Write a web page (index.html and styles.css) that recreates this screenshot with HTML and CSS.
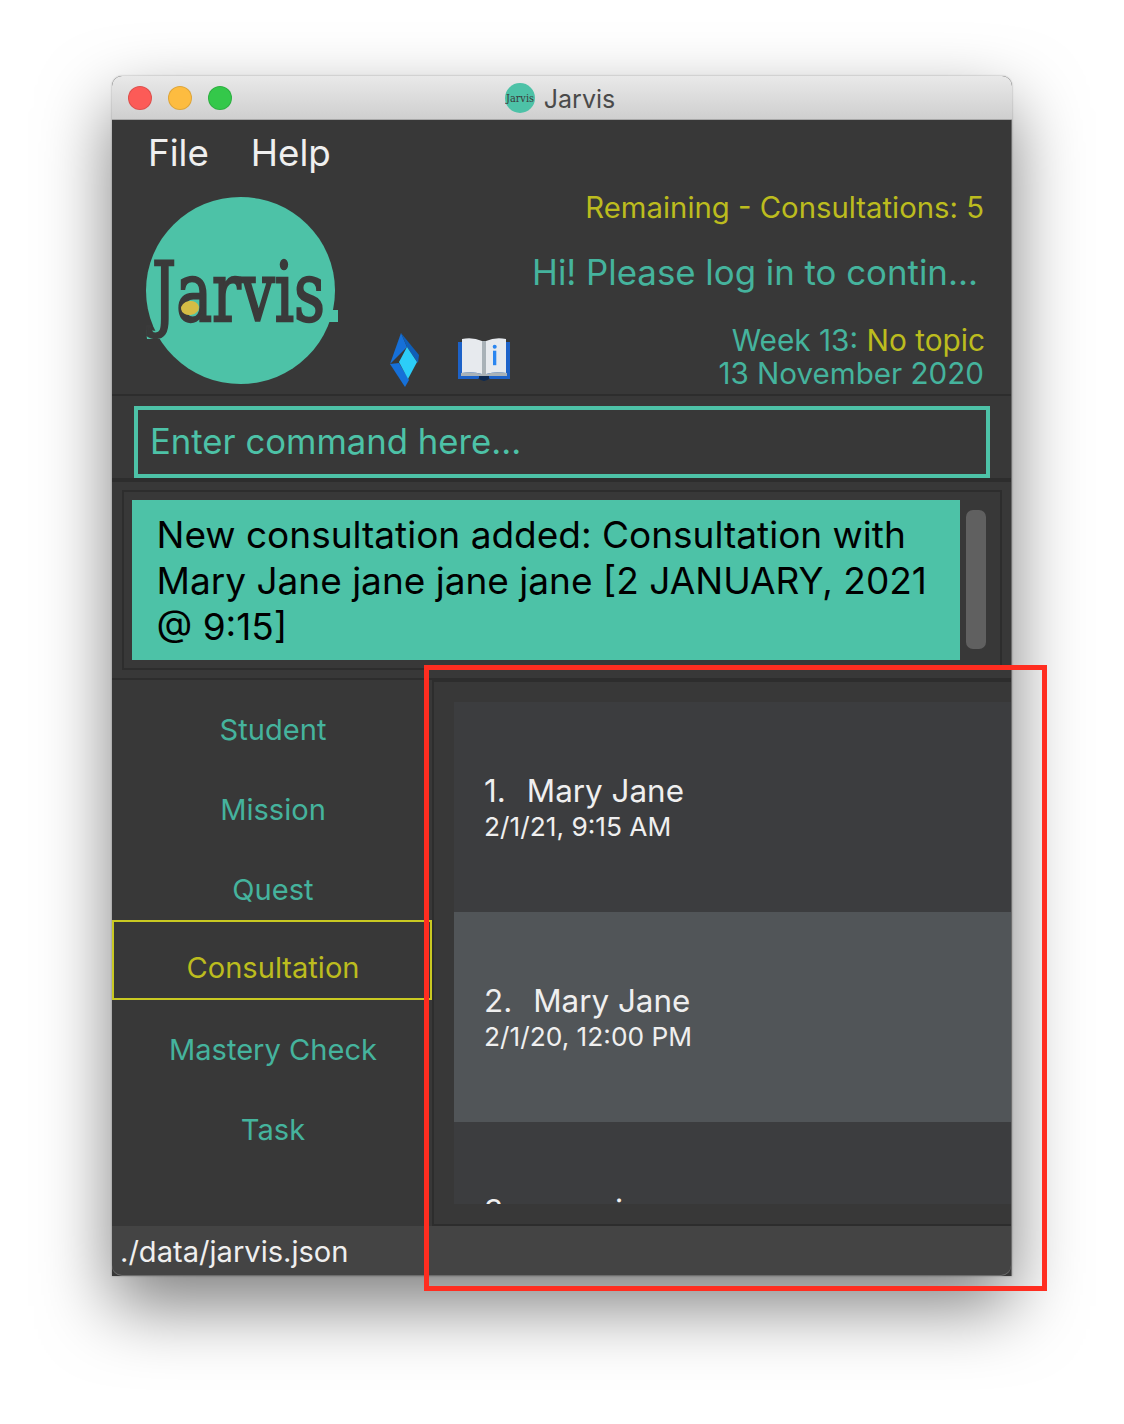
FILE: index.html
```html
<!DOCTYPE html>
<html lang="en">
<head>
<meta charset="utf-8">
<title>Jarvis</title>
<link rel="stylesheet" href="styles.css">
</head>
<body>
<div class="window">
  <header class="titlebar">
    <div class="lights"><span class="light red"></span><span class="light yellow"></span><span class="light green"></span></div>
    <div class="title">
      <svg class="title-logo" viewBox="0 0 30 30"><circle cx="15" cy="15" r="15" fill="#4dc2a7"/><text x="15" y="19" text-anchor="middle" class="title-logo-text" textLength="28" lengthAdjust="spacingAndGlyphs">Jarvis</text></svg>
      <span class="title-text">Jarvis</span>
    </div>
  </header>
  <div class="content">
    <section class="top">
      <nav class="menu"><span>File</span><span>Help</span></nav>
      <div class="brand-row">
        <svg class="logo" viewBox="0 0 194 190">
          <ellipse cx="94.500" cy="93.500" rx="94.500" ry="93.500" fill="#4dc2a7"/>
          <path d="M0 133 L11 134 L15 142 L1 142 Z" fill="#4dc2a7"/>
          <path d="M184 113 L192 113 L192 125 L182 125 Z" fill="#4dc2a7"/>
          <text x="6" y="124" class="logo-text" textLength="173" lengthAdjust="spacingAndGlyphs">Jarvis</text>
          <ellipse cx="44" cy="111" rx="9" ry="7" fill="#d4bc45" transform="rotate(-8 44 111)"/>
        </svg>
        <div class="icons">
          <svg class="gem" viewBox="0 0 30 54">
            <path d="M11 0 L0 31 L17 14 Z" fill="#1670d8"/>
            <path d="M11 0 L29 22 L28 30 L17 14 Z" fill="#0f5fb8"/>
            <path d="M0 31 L15 54 L19 47 L9 30 Z" fill="#1670d8"/>
            <path d="M17 14 L9 29 L18 46 L27 29 Z" fill="#2ccdf8"/>
          </svg>
          <svg class="book" viewBox="0 0 52 43">
            <rect x="0" y="4" width="52" height="37" fill="#1d62c8"/>
            <path d="M20 40 Q26 46 32 40 Z" fill="#0e2a52"/>
            <path d="M4 35 L4 1 Q15 -1 24 3 L24 36 Q14 33 4 35 Z" fill="#e7eaee"/>
            <path d="M28 3 Q37 -1 48 1 L48 35 Q38 33 28 36 Z" fill="#e7eaee"/>
            <rect x="24" y="3" width="4" height="34" fill="#a9b2b8"/>
            <path d="M3 35 Q14 33 24 36 L28 36 Q38 33 49 35 L49 38 L3 38 Z" fill="#a9b2b8"/>
            <rect x="21" y="38" width="10" height="2" fill="#0e2a52"/>
            <circle cx="36.700" cy="8.700" r="2" fill="#2b86f0"/>
            <rect x="35" y="12.700" width="3.300" height="14.500" fill="#2b86f0"/>
          </svg>
        </div>
        <div class="info">
          <div class="remaining">Remaining - Consultations: 5</div>
          <div class="greeting">Hi! Please log in to contin...</div>
          <div class="week"><span class="teal">Week 13:</span> <span class="olive">No topic</span></div>
          <div class="date">13 November 2020</div>
        </div>
      </div>
    </section>
    <section class="command-bar">
      <div class="command">Enter command here...</div>
    </section>
    <section class="result-bar">
      <div class="result-frame">
        <div class="result">New consultation added: Consultation with<br>Mary Jane jane jane jane [2 JANUARY, 2021<br>@ 9:15]</div>
        <div class="scroll-track"><div class="scroll-thumb"></div></div>
      </div>
    </section>
    <section class="main">
      <aside class="tabs">
        <div class="tab">Student</div>
        <div class="tab">Mission</div>
        <div class="tab">Quest</div>
        <div class="tab active">Consultation</div>
        <div class="tab">Mastery Check</div>
        <div class="tab">Task</div>
      </aside>
      <div class="panel">
        <div class="list">
          <article class="card">
            <div class="card-name"><span class="num">1.</span>Mary Jane</div>
            <div class="card-date">2/1/21, 9:15 AM</div>
          </article>
          <article class="card alt">
            <div class="card-name"><span class="num">2.</span>Mary Jane</div>
            <div class="card-date">2/1/20, 12:00 PM</div>
          </article>
          <article class="card">
            <div class="card-name"><span class="num">3.</span>omani</div>
            <div class="card-date"></div>
          </article>
        </div>
      </div>
    </section>
    <footer class="status">./data/jarvis.json</footer>
  </div>
</div>
<div class="annotation"></div>
</body>
</html>
```
FILE: styles.css
```css
* { box-sizing: border-box; }
html, body { margin: 0; height: 100%; background: #fff; overflow: hidden; }
body { font-family: Inter, "Noto Sans", sans-serif; position: relative; padding: 76px 112px 0; }

.window {
  width: 900px;
  height: 1200px;
  display: flex;
  flex-direction: column;
  border-radius: 10px 10px 0 0;
  box-shadow: 0 30px 70px rgba(0,0,0,.5), 0 0 2px rgba(0,0,0,.35);
  background: #383838;
}

.titlebar {
  height: 44px;
  flex: none;
  position: relative;
  display: flex;
  align-items: center;
  justify-content: center;
  background: linear-gradient(#e9e9e9, #cfcfcf);
  border-radius: 10px 10px 0 0;
  border-bottom: 1px solid #a8a8a8;
}
.lights { position: absolute; left: 16px; top: 10px; display: flex; gap: 16px; }
.light { width: 24px; height: 24px; border-radius: 50%; border: 1px solid rgba(0,0,0,.12); }
.red { background: #fc5b57; }
.yellow { background: #fdbc40; }
.green { background: #34c84a; }
.title { display: flex; align-items: center; gap: 9px; color: #4a4a4a; font-size: 25px; margin-right: 4px; }
.title-text { margin-top: 2px; }
.title-logo { width: 30px; height: 30px; display: block; }
.title-logo-text { font-family: "DejaVu Serif", serif; font-size: 11px; fill: #3a3a3a; }

.content { flex: 1; min-height: 0; display: flex; flex-direction: column; border-right: 1px solid #6d6d6d; }

.top { height: 276px; flex: none; position: relative; border-bottom: 2px solid #2d2d2d; }
.menu { display: flex; gap: 42px; padding-left: 36px; height: 68px; padding-top: 8px; color: #efefef; font-size: 36.7px; line-height: 50px; }
.brand-row { position: relative; display: flex; height: 206px; }
.logo { width: 194px; height: 190px; margin: 9px 0 0 34px; flex: none; display: block; }
.logo-text { font-family: "DejaVu Serif", serif; font-size: 82px; fill: #3a3a3a; stroke: #3a3a3a; stroke-width: 2.4px; }
.icons { display: flex; align-items: flex-start; gap: 38px; margin-left: 50px; padding-top: 145px; flex: none; }
.gem { width: 30px; height: 54px; display: block; }
.book { width: 52px; height: 43px; margin-top: 5px; display: block; }
.info { flex: 1; display: flex; flex-direction: column; align-items: flex-end; padding-right: 26px; }
.remaining { color: #bcbc1e; font-size: 29.3px; line-height: 40px; padding-right: 1px; }
.greeting { color: #45b39d; font-size: 34.8px; line-height: 46px; margin-top: 21px; padding-right: 7px; }
.week { font-size: 29.8px; line-height: 33px; margin-top: 29px; }
.date { color: #45b39d; font-size: 29.6px; line-height: 33px; padding-right: 1px; }
.teal { color: #45b39d; }
.olive { color: #bcbc1e; }

.command-bar { height: 86px; flex: none; padding: 10px 21px 0 22px; border-bottom: 4px solid #2d2d2d; }
.command { height: 72px; border: 4px solid #4dc2a7; color: #4dc2a7; font-size: 34.7px; line-height: 62px; padding-left: 12px; }

.result-bar { height: 198px; flex: none; padding: 8px 9px 8px 10px; border-bottom: 2px solid #2d2d2d; }
.result-frame { height: 180px; border: 2px solid #2d2d2d; padding: 8px 0 8px 8px; display: flex; }
.result { width: 828px; background: #4dc2a7; color: #000; font-size: 37px; line-height: 46px; padding: 12px 0 0 24.500px; white-space: nowrap; }
.scroll-track { flex: 1; padding: 10px 14px 0 6px; }
.scroll-thumb { width: 20px; height: 139px; border-radius: 7px; background: #606060; }

.main { flex: 1; min-height: 0; display: flex; }
.tabs { width: 320px; flex: none; padding-top: 9px; display: flex; flex-direction: column; }
.tab { height: 80px; display: flex; align-items: center; justify-content: center; color: #45b39d; font-size: 29.1px; padding-left: 2px; }
.tab.active { color: #bcbc1e; border: 2px solid #c9c922; padding-top: 14px; margin-top: -9px; margin-bottom: 9px; }
.panel { flex: 1; min-width: 0; border-left: 2px solid #2d2d2d; border-top: 2px solid #2d2d2d; border-bottom: 2px solid #2d2d2d; padding: 20px 0 20px 20px; }
.list { height: 502px; overflow: hidden; }
.card { height: 210px; background: #3c3d3f; color: #efefef; padding: 70px 0 0 30px; }
.card.alt { background: #515558; }
.card-name { font-size: 31.4px; line-height: 38px; white-space: nowrap; }
.num { margin-right: 21px; }
.card-date { font-size: 26.3px; line-height: 34px; white-space: nowrap; }

.status { height: 50px; flex: none; background: #444; color: #efefef; font-size: 29.1px; line-height: 52px; padding-left: 8px; border-radius: 0 0 10px 10px; box-shadow: inset 0 -1px 0 #6d6d6d; }

.annotation { position: absolute; left: 424px; top: 665px; width: 623px; height: 626px; border: 5px solid #ff2d20; pointer-events: none; }
```
